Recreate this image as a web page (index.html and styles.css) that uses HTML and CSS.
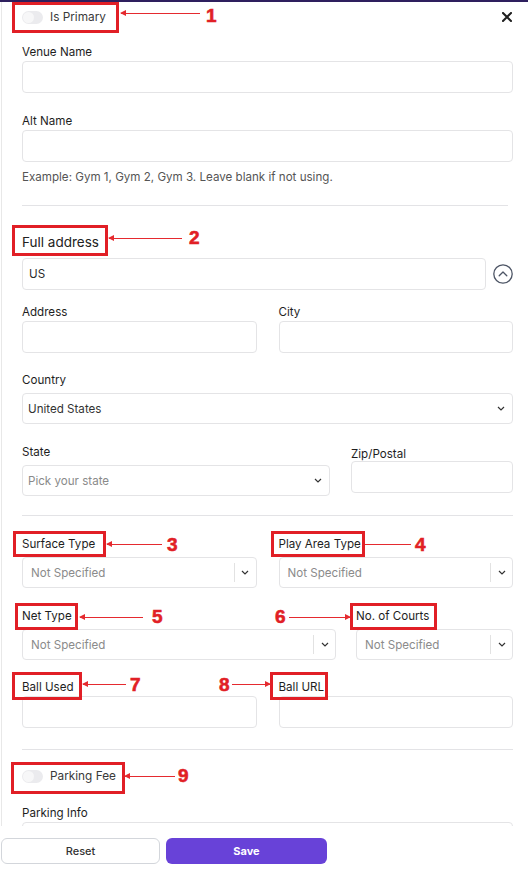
FILE: index.html
```html
<!DOCTYPE html>
<html lang="en">
<head>
<meta charset="utf-8">
<title>Venue</title>
<link rel="stylesheet" href="styles.css">
</head>
<body>
<div class="app">
  <div class="topbar"></div>
  <div class="scroll">
    <div class="head-row">
      <label class="switch"><span class="track"><span class="knob"></span></span><span class="switch-text">Is Primary</span></label>
      <svg class="close" width="10" height="10" viewBox="0 0 10 10"><path d="M1 1L9 9M9 1L1 9" stroke="#1f1f1f" stroke-width="2" stroke-linecap="square"/></svg>
    </div>

    <div class="field first">
      <div class="label">Venue Name</div>
      <div class="input"></div>
    </div>
    <div class="field">
      <div class="label">Alt Name</div>
      <div class="input"></div>
    </div>
    <div class="help">Example: Gym 1, Gym 2, Gym 3. Leave blank if not using.</div>
    <hr class="sep sep-1">

    <div class="section-title">Full address</div>
    <div class="addr-row">
      <div class="input text">US</div>
      <svg class="circle-up" width="20" height="20" viewBox="0 0 20 20"><circle cx="10" cy="10" r="9.2" fill="none" stroke="#4d5565" stroke-width="1.3"/><path d="M6.2 11.8L10 8l3.8 3.8" fill="none" stroke="#4d5565" stroke-width="1.3" stroke-linecap="round" stroke-linejoin="round"/></svg>
    </div>

    <div class="grid two row-address">
      <div class="field-c">
        <div class="label">Address</div>
        <div class="input"></div>
      </div>
      <div class="field-c">
        <div class="label">City</div>
        <div class="input"></div>
      </div>
    </div>

    <div class="field row-country">
      <div class="label sel">Country</div>
      <div class="select">
        <span class="value">United States</span>
        <svg width="8" height="5" viewBox="0 0 8 5"><path d="M1 1l3 3 3-3" fill="none" stroke="#333" stroke-width="1.2"/></svg>
      </div>
    </div>

    <div class="grid state-row">
      <div class="field-c">
        <div class="label sel">State</div>
        <div class="select">
          <span class="value muted">Pick your state</span>
          <svg width="8" height="5" viewBox="0 0 8 5"><path d="M1 1l3 3 3-3" fill="none" stroke="#333" stroke-width="1.2"/></svg>
        </div>
      </div>
      <div class="field-c zip">
        <div class="label">Zip/Postal</div>
        <div class="input"></div>
      </div>
    </div>
    <hr class="sep sep-2">

    <div class="grid two row-surface">
      <div class="field-c">
        <div class="label sel">Surface Type</div>
        <div class="rselect"><span class="ph">Not Specified</span><span class="rs-sep"></span><span class="rs-ind"><svg width="8" height="5" viewBox="0 0 8 5"><path d="M1 1l3 3 3-3" fill="none" stroke="#333" stroke-width="1.2"/></svg></span></div>
      </div>
      <div class="field-c">
        <div class="label sel">Play Area Type</div>
        <div class="rselect"><span class="ph">Not Specified</span><span class="rs-sep"></span><span class="rs-ind"><svg width="8" height="5" viewBox="0 0 8 5"><path d="M1 1l3 3 3-3" fill="none" stroke="#333" stroke-width="1.2"/></svg></span></div>
      </div>
    </div>

    <div class="grid net-row">
      <div class="field-c">
        <div class="label sel">Net Type</div>
        <div class="rselect"><span class="ph">Not Specified</span><span class="rs-sep"></span><span class="rs-ind"><svg width="8" height="5" viewBox="0 0 8 5"><path d="M1 1l3 3 3-3" fill="none" stroke="#333" stroke-width="1.2"/></svg></span></div>
      </div>
      <div class="field-c">
        <div class="label sel">No. of Courts</div>
        <div class="rselect"><span class="ph">Not Specified</span><span class="rs-sep"></span><span class="rs-ind"><svg width="8" height="5" viewBox="0 0 8 5"><path d="M1 1l3 3 3-3" fill="none" stroke="#333" stroke-width="1.2"/></svg></span></div>
      </div>
    </div>

    <div class="grid two row-ball">
      <div class="field-c">
        <div class="label">Ball Used</div>
        <div class="input"></div>
      </div>
      <div class="field-c">
        <div class="label">Ball URL</div>
        <div class="input"></div>
      </div>
    </div>
    <hr class="sep sep-3">

    <div class="head-row parking">
      <label class="switch"><span class="track"><span class="knob"></span></span><span class="switch-text">Parking Fee</span></label>
    </div>
    <div class="field row-parking">
      <div class="label">Parking Info</div>
      <div class="input"></div>
    </div>
  </div>

  <div class="footer">
    <button class="btn btn-reset">Reset</button>
    <button class="btn btn-save">Save</button>
  </div>

  <div class="annotations">
    <div class="box b1"></div>
    <div class="arrow left a1"></div>
    <div class="num n1">1</div>

    <div class="box b2"></div>
    <div class="arrow left a2"></div>
    <div class="num n2">2</div>

    <div class="box b3"></div>
    <div class="arrow left a3"></div>
    <div class="num n3">3</div>

    <div class="box b4"></div>
    <div class="arrow plain a4"></div>
    <div class="num n4">4</div>

    <div class="box b5"></div>
    <div class="arrow left a5"></div>
    <div class="num n5">5</div>

    <div class="box b6"></div>
    <div class="arrow right a6"></div>
    <div class="num n6">6</div>

    <div class="box b7"></div>
    <div class="arrow left a7"></div>
    <div class="num n7">7</div>

    <div class="box b8"></div>
    <div class="arrow right a8"></div>
    <div class="num n8">8</div>

    <div class="box b9"></div>
    <div class="arrow left a9"></div>
    <div class="num n9">9</div>
  </div>
</div>
</body>
</html>
```

FILE: styles.css
```css
* { box-sizing: border-box; }
html, body { margin: 0; padding: 0; background: #fff; }
body {
  font-family: Inter, "Noto Sans", "Liberation Sans", sans-serif;
  font-size: 11.6px;
  color: #1e1e1e;
}
.app {
  position: relative;
  width: 528px;
  height: 875px;
  display: flex;
  flex-direction: column;
  overflow: hidden;
}
.topbar { height: 2px; background: #2e1f5e; flex: none; }
.scroll {
  flex: 1;
  overflow: hidden;
  margin-left: 1px;
  border-left: 1px solid #e8e8e8;
  padding: 0 15px 0 20px;
}
.head-row {
  height: 30px;
  display: flex;
  align-items: center;
  justify-content: space-between;
}
.switch { display: flex; align-items: center; gap: 7px; }
.track {
  width: 21px; height: 13px; border-radius: 7px;
  background: #ebebee;
  position: relative;
  display: block;
}
.knob {
  position: absolute; left: 1px; top: 1px;
  width: 11px; height: 11px; border-radius: 50%;
  background: #f7f7f8;
}
.switch-text { color: #3a3a3a; font-size: 11.8px; line-height: 16px; }
.close { margin-right: 1px; display: block; }

.label { line-height: 16px; font-size: 11.6px; color: #1e1e1e; margin-bottom: 1px; }
.label.sel { margin-bottom: 5px; }
.input {
  height: 32px;
  border: 1px solid #e4e4e6;
  border-radius: 4px;
  background: #fff;
}
.input.text { display: flex; align-items: center; padding-left: 6px; color: #2a2a2a; }
.field { margin-top: 20px; }
.field.first { margin-top: 12px; }
.help { margin-top: 7px; line-height: 16px; color: #555; }
.sep { border: 0; border-top: 1px solid #e3e3e6; margin: 0; height: 0; }
.sep-1 { margin-top: 20px; margin-right: 5px; }
.section-title { margin-top: 27px; font-size: 13.5px; line-height: 18px; color: #222; }
.addr-row { margin-top: 7px; display: flex; align-items: center; gap: 7px; }
.addr-row .input { flex: 1; }
.circle-up { flex: none; display: block; }

.grid { display: grid; }
.grid.two { grid-template-columns: 1fr 1fr; column-gap: 22px; }
.row-address { margin-top: 14px; }
.row-country { margin-top: 19px; }
.state-row { margin-top: 20px; grid-template-columns: 308px 1fr; column-gap: 21px; }
.zip .label { margin-top: 2px; }
.zip .input { height: 32px; margin-top: -2px; }
.sep-2 { margin-top: 19px; }
.row-surface { margin-top: 20px; }
.net-row { margin-top: 20px; grid-template-columns: 314px 1fr; column-gap: 20px; }
.row-ball { margin-top: 19px; }
.sep-3 { margin-top: 21px; }
.parking { margin-top: 11px; }
.row-parking { margin-top: 14px; }

.select {
  height: 31px;
  border: 1px solid #e4e4e6;
  border-radius: 4px;
  display: flex;
  align-items: center;
  justify-content: space-between;
  padding: 0 7px 0 5px;
}
.select svg, .rselect svg { display: block; }
.value { color: #333; }
.value.muted { color: #8a8a8a; }
.rselect {
  height: 31px;
  border: 1px solid #e4e4e6;
  border-radius: 4px;
  display: flex;
  align-items: center;
  padding-left: 8px;
}
.ph { flex: 1; color: #8b8b8b; }
.rs-sep { width: 1px; height: 19px; background: #e2e2e2; }
.rs-ind { width: 21px; display: flex; justify-content: center; }

.footer {
  height: 49px;
  flex: none;
  background: #fff;
  display: flex;
  align-items: flex-start;
  gap: 6px;
  padding: 12px 0 0 1px;
}
.btn {
  height: 26px;
  border-radius: 6px;
  font-family: Inter, "Liberation Sans", sans-serif;
  font-size: 11px;
  cursor: pointer;
}
.btn-reset {
  width: 159px;
  border: 1px solid #d3d6db;
  background: #fff;
  color: #333;
  font-weight: 500;
}
.btn-save {
  width: 161px;
  border: 0;
  background: #6842d8;
  color: #fff;
  font-weight: 700;
}

/* annotation overlay */
.annotations { position: absolute; inset: 0; pointer-events: none; }
.box { position: absolute; border: 3px solid #e11f26; }
.arrow { position: absolute; height: 1px; background: #e52a2f; }
.arrow.left::before {
  content: ""; position: absolute; left: -1px; top: -3px;
  border-top: 3.5px solid transparent; border-bottom: 3.5px solid transparent;
  border-right: 6px solid #e52a2f;
}
.arrow.right::after {
  content: ""; position: absolute; right: -1px; top: -3px;
  border-top: 3.5px solid transparent; border-bottom: 3.5px solid transparent;
  border-left: 6px solid #e52a2f;
}
.num {
  position: absolute;
  font-family: "Liberation Sans", Arial, sans-serif;
  font-weight: 700;
  font-size: 19px;
  line-height: 19px;
  color: #e11f26;
  -webkit-text-stroke: 0.6px #e11f26;
}
.b1 { left: 12px; top: 2px; width: 107px; height: 31px; }
.a1 { left: 121px; top: 13px; width: 79px; }
.n1 { left: 206px; top: 6px; }
.b2 { left: 12px; top: 225px; width: 96px; height: 31px; }
.a2 { left: 109px; top: 238px; width: 73px; }
.n2 { left: 189px; top: 228px; }
.b3 { left: 13px; top: 531px; width: 93px; height: 26px; }
.a3 { left: 107px; top: 544px; width: 55px; }
.n3 { left: 167px; top: 535px; }
.b4 { left: 271px; top: 531px; width: 94px; height: 26px; }
.a4 { left: 365px; top: 544px; width: 46px; }
.n4 { left: 415px; top: 535px; }
.b5 { left: 15px; top: 603px; width: 63px; height: 27px; }
.a5 { left: 80px; top: 617px; width: 63px; }
.n5 { left: 152px; top: 607px; }
.b6 { left: 350px; top: 603px; width: 87px; height: 27px; }
.a6 { left: 289px; top: 617px; width: 61px; }
.n6 { left: 275px; top: 607px; }
.b7 { left: 12px; top: 672px; width: 70px; height: 28px; }
.a7 { left: 83px; top: 684px; width: 43px; }
.n7 { left: 130px; top: 675px; }
.b8 { left: 270px; top: 672px; width: 58px; height: 28px; }
.a8 { left: 232px; top: 684px; width: 38px; }
.n8 { left: 219px; top: 675px; }
.b9 { left: 11px; top: 762px; width: 114px; height: 32px; }
.a9 { left: 125px; top: 776px; width: 50px; }
.n9 { left: 178px; top: 766px; }
```
